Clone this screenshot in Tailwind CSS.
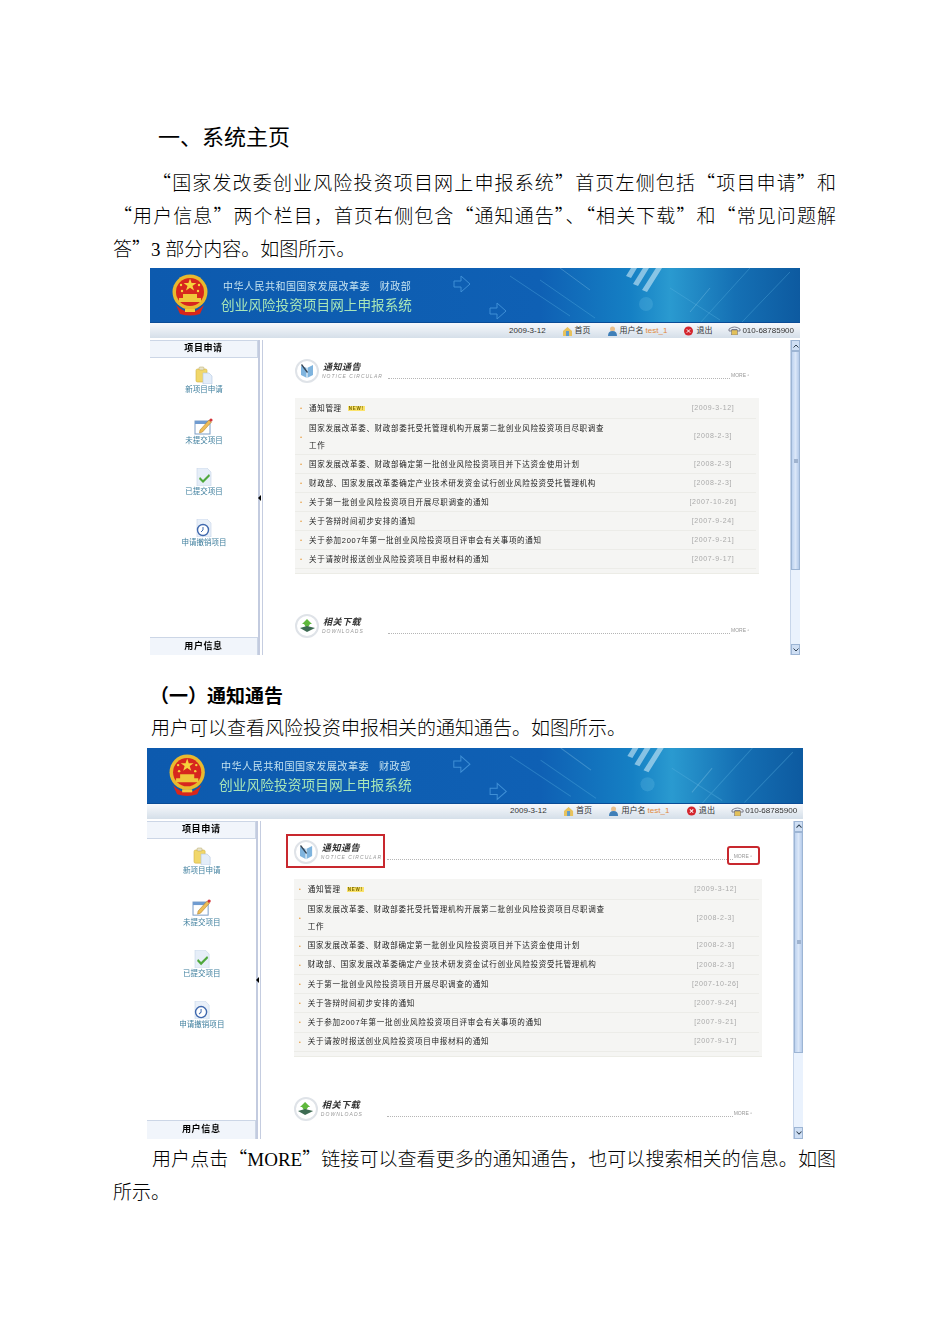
<!DOCTYPE html>
<html lang="zh-CN">
<head>
  <meta charset="UTF-8" />
  <title>系统主页</title>
  <script src="https://cdn.jsdelivr.net/npm/@tailwindcss/browser@4"></script>
</head>
<body class="bg-white text-black font-['Noto_Sans_CJK_SC','Liberation_Serif',serif] font-light text-[19px] leading-[33px]">

  <div class="w-[723px] ml-[113px] pt-[118px]">
    <h1 class="ml-[45px] text-[22px] leading-[34px] font-normal">一、系统主页</h1>
    <div class="mt-[13px]">
      <p class="pl-[39px] text-justify [text-align-last:justify]">“国家发改委创业风险投资项目网上申报系统”首页左侧包括“项目申请”和</p>
      <p class="text-justify [text-align-last:justify]">“用户信息”两个栏目，首页右侧包含“通知通告”、“相关下载”和“常见问题解</p>
      <p>答”<span class="font-['Liberation_Serif'] leading-none">3 </span>部分内容。如图所示。</p>
    </div>
    <div id="shot1" class="ml-[37px] mt-[4px] h-[387px]"></div>
    <h2 class="mt-[23px] ml-[37px] font-bold">（一）通知通告</h2>
    <p class="ml-[38px] mt-[-1px]">用户可以查看风险投资申报相关的通知通告。如图所示。</p>
    <div id="shot2" class="ml-[34px] mt-[5px] h-[387px] [zoom:1.0092]"></div>
    <div class="mt-[2px]">
      <p class="pl-[39px] text-justify [text-align-last:justify]">用户点击“<span class="font-['Liberation_Serif'] leading-none">MORE</span>”链接可以查看更多的通知通告，也可以搜索相关的信息。如图</p>
      <p>所示。</p>
    </div>
  </div>

  <script>
    const emblem = `
      <svg width="40" height="44" viewBox="0 0 40 44" class="shrink-0">
        <path d="M6 32 Q20 46 34 32 L30 41 Q20 44 10 41 Z" fill="#d8261c"/>
        <circle cx="20" cy="19" r="17.5" fill="#e9b92e"/>
        <circle cx="20" cy="19" r="14" fill="#d7261e"/>
        <path d="M20 5.5l1.6 4.6h4.8l-3.9 2.9 1.5 4.6-4-2.8-4 2.8 1.5-4.6-3.9-2.9h4.8z" fill="#f6d33c"/>
        <circle cx="11" cy="12" r="1.2" fill="#f6d33c"/><circle cx="29" cy="12" r="1.2" fill="#f6d33c"/>
        <circle cx="12" cy="18" r="1.2" fill="#f6d33c"/><circle cx="28" cy="18" r="1.2" fill="#f6d33c"/>
        <path d="M9 25h22v4H9zM13 21h14v4H13z" fill="#f0c63a"/>
        <path d="M15 36h10v3H15z" fill="#f3c93c"/>
      </svg>`;

    const bannerArt = `
      <svg class="absolute inset-0" width="650" height="55" viewBox="0 0 650 55" fill="none">
        <path d="M304 13h7v-5l9 8-9 8v-5h-7z" stroke="#3f8fd6" stroke-width="1"/>
        <path d="M340 40h7v-5l9 8-9 8v-5h-7z" stroke="#3f8fd6" stroke-width="1"/>
        <path d="M360 8l60 40M390 12l55 38M520 20l50 32M600 0l-50 55M640 4l-48 50" stroke="#5cb4e2" stroke-opacity=".35"/>
        <path d="M481 0l-5 8 5 2 6-10zM493 0l-10 16 5 2 11-18zM506 0l-14 22 5 2 15-24z" fill="#cfeaf6" fill-opacity=".6"/>
        <circle cx="496" cy="36" r="7" fill="#8fd6f2" fill-opacity=".18"/>
        <path d="M410 0l30 22M540 44l20-24" stroke="#9ad4ef" stroke-opacity=".3"/>
      </svg>`;

    const sideIcons = [
      `<svg width="20" height="18" viewBox="0 0 20 18"><rect x="2" y="3" width="11" height="13" rx="1.5" fill="#f1d76a" stroke="#d2b245" stroke-width=".6"/><rect x="5" y="1" width="5" height="3" rx="1" fill="#e8e4cc" stroke="#b8a860" stroke-width=".5"/><path d="M9 7h6l3 3v8H9z" fill="#e3edf9" stroke="#b4c7e0" stroke-width=".6"/></svg>`,
      `<svg width="20" height="18" viewBox="0 0 20 18"><rect x="1" y="4" width="15" height="13" fill="#fff" stroke="#7d9ec6"/><rect x="1" y="4" width="15" height="3" fill="#6f9bd0"/><path d="M6 13l9-10 2.5 2-9 10-3 1z" fill="#eebd57" stroke="#a6792a" stroke-width=".5"/><circle cx="17" cy="3" r="1.6" fill="#d3343a"/></svg>`,
      `<svg width="20" height="18" viewBox="0 0 20 18"><path d="M3 0h10l4 4v14H3z" fill="#e6eef8" stroke="#c7d5e8" stroke-width=".6"/><path d="M6 9l3 3 6-6 1 2-7 7-4-4z" fill="#4fa83c"/></svg>`,
      `<svg width="20" height="18" viewBox="0 0 20 18"><path d="M3 0h10l4 4v14H3z" fill="#e9f0f9" stroke="#c7d5e8" stroke-width=".6"/><circle cx="9" cy="11" r="5.5" fill="#fff" stroke="#3f68ad" stroke-width="1.4"/><path d="M9 8v3l-2 2" stroke="#3f68ad" fill="none"/></svg>`
    ];
    const sideLabels = ["新项目申请", "未提交项目", "已提交项目", "申请撤销项目"];

    const rows = [
      { text: "通知管理", date: "[2009-3-12]", isNew: true },
      { text: "国家发展改革委、财政部委托受托管理机构开展第二批创业风险投资项目尽职调查", more: "工作", date: "[2008-2-3]" },
      { text: "国家发展改革委、财政部确定第一批创业风险投资项目并下达资金使用计划", date: "[2008-2-3]" },
      { text: "财政部、国家发展改革委确定产业技术研发资金试行创业风险投资受托管理机构", date: "[2008-2-3]" },
      { text: "关于第一批创业风险投资项目开展尽职调查的通知", date: "[2007-10-26]" },
      { text: "关于答辩时间初步安排的通知", date: "[2007-9-24]" },
      { text: "关于参加2007年第一批创业风险投资项目评审会有关事项的通知", date: "[2007-9-21]" },
      { text: "关于请按时报送创业风险投资项目申报材料的通知", date: "[2007-9-17]" }
    ];

    function sectionHead(icon, title, sub) {
      return `
        <div class="flex items-end h-[26px]">
          <div class="w-[24px] h-[24px] rounded-full border-2 border-[#dfe3e8] bg-white flex items-center justify-center shrink-0">${icon}</div>
          <div class="ml-[3px] w-[66px] shrink-0 mb-[3px]">
            <div class="text-[9px] leading-[11px] font-bold italic text-[#333] tracking-[0.5px] pl-[1px]">${title}</div>
            <div class="text-[5px] leading-[7px] italic text-[#999] tracking-[1px] font-['Liberation_Sans',sans-serif]">${sub}</div>
          </div>
          <div class="flex-1 border-b border-dotted border-[#b5b5b5] mb-[4px]"></div>
          <div class="w-[29px] pl-[1px] text-[5px] leading-[8px] text-[#999] font-['Liberation_Sans',sans-serif] mb-[4px]">MORE ▫</div>
        </div>`;
    }

    function listRow(r, i) {
      const tag = r.isNew ? `<span class="ml-[6px] text-[4.5px] font-bold text-[#7a6a00] bg-[#fbe36a] px-[1px] leading-[5px] font-['Liberation_Sans',sans-serif]">NEW!</span>` : "";
      const rowClass = r.more ? "h-[36px]" : (i === 0 ? "h-[21px]" : "h-[19px]");
      return `
        <div class="flex items-center ${rowClass} border-b border-[#ecece8] mr-[3px]">
          <span class="w-[14px] pl-[5px] text-[#e8a24a] text-[6px] leading-none shrink-0">•</span>
          <div class="flex-1 text-[7.5px] leading-[17px] tracking-[0.7px] text-[#222]">
            <div class="flex items-center">${r.text}${tag}</div>
            ${r.more ? `<div>${r.more}</div>` : ""}
          </div>
          <span class="w-[86px] text-center text-[7px] tracking-[0.6px] text-[#aaa] font-['Liberation_Sans',sans-serif] shrink-0">${r.date}</span>
        </div>`;
    }

    function shot(marks) {
      return `
      <div class="relative w-[650px] h-[387px] overflow-hidden blur-[0.35px] font-normal leading-normal font-['Liberation_Sans','Noto_Sans_CJK_SC',sans-serif]">
        <div class="relative h-[55px] flex items-center pl-[20px] border-b border-[#0a4c96] bg-[linear-gradient(90deg,#0d5aae_0%,#0f60b4_60%,#1580c4_74%,#2a9ad0_80%,#1570b4_90%,#0d5aa0_100%)] overflow-hidden">
          ${bannerArt}
          ${emblem}
          <div class="relative ml-[11px] mt-[4px]">
            <div class="text-[10px] leading-[16px] tracking-[0.5px] text-[#c4e2ef] whitespace-pre pl-[2px]">中华人民共和国国家发展改革委   财政部</div>
            <div class="text-[13.6px] leading-[21px] tracking-[0.05px] text-[#a8e6b8]">创业风险投资项目网上申报系统</div>
          </div>
        </div>
        <div class="h-[15px] flex items-center justify-end pr-[6px] gap-[16px] text-[8px] text-[#333] bg-[linear-gradient(180deg,#f7f9fc,#d5dfe9)]">
          <span>2009-3-12</span>
          <span class="flex items-center gap-[2px]">
            <svg width="11" height="10" viewBox="0 0 11 10"><path d="M1 5l4.5-4L10 5v5H1z" fill="#e8c25c"/><path d="M4 5h3v5H4z" fill="#5f9ccc"/></svg>首页
          </span>
          <span class="flex items-center gap-[2px]">
            <svg width="11" height="10" viewBox="0 0 11 10"><circle cx="5.5" cy="3" r="2.5" fill="#e8c08e"/><path d="M1 10q0-5 4.5-5T10 10z" fill="#3f7fb8"/></svg>用户名 <span class="text-[#e08a3c]">test_1</span>
          </span>
          <span class="flex items-center gap-[2px]">
            <svg width="11" height="10" viewBox="0 0 11 10"><circle cx="5.5" cy="5" r="4.500" fill="#d4262e"/><path d="M3.800 3.300l3.400 3.400M7.200 3.300l-3.400 3.400" stroke="#fff"/></svg>退出
          </span>
          <span class="flex items-center gap-[1px]">
            <svg width="13" height="9" viewBox="0 0 13 9"><path d="M1 3q5.500-4 11 0v2H9V3.500H4V5H1z" fill="none" stroke="#667" stroke-width=".8"/><rect x="3.500" y="4" width="6" height="5" fill="#e2c05a" stroke="#667" stroke-width=".5"/></svg>010-68785900
          </span>
        </div>
        <div class="flex h-[315px] mt-[2px]">
          <aside class="w-[108px] shrink-0 flex flex-col">
            <div class="h-[18px] border border-[#ccd6e6] border-l-0 bg-[#f1f5fb] flex items-center justify-center text-[9px] font-bold tracking-[0.6px]">项目申请</div>
            <div class="flex-1 flex flex-col items-center pt-[8px] gap-[16px]">
              ${sideLabels.map((label, i) => `
                <div class="flex flex-col items-center h-[35px]">
                  ${sideIcons[i]}
                  <span class="text-[7.5px] leading-[12px] text-[#3f7f9e] whitespace-nowrap">${label}</span>
                </div>`).join("")}
            </div>
            <div class="h-[18px] border-t border-[#ccd6e6] bg-[#f1f5fb] flex items-center justify-center text-[9px] font-bold tracking-[0.6px] border-r">用户信息</div>
          </aside>
          <div class="w-[5px] shrink-0 border-r border-[#c5cde0] bg-[linear-gradient(90deg,#c3cbdf_60%,#fff_60%)] flex items-center">
            <span class="w-0 h-0 border-y-[3px] border-y-transparent border-r-[3px] border-r-black"></span>
          </div>
          <main class="flex-1 pl-[32px] pr-[33px] pt-[17px] overflow-hidden">
            ${sectionHead(`<svg width="16" height="16" viewBox="0 0 16 16"><path d="M2 3l6 2 6-3v10l-6 3-6-3z" fill="#7fb4de"/><path d="M8 5v10" stroke="#fff"/><path d="M3 1l6 8-1 1-6-8z" fill="#345"/></svg>`, "通知通告", "NOTICE CIRCULAR")}
            <div class="mt-[15px] h-[176px] bg-[#f5f5f3] border-b border-[#ecece6]">
              ${rows.map(listRow).join("")}
            </div>
            <div class="mt-[38px]">
              ${sectionHead(`<svg width="17" height="16" viewBox="0 0 17 16"><path d="M8 1l5 5h-2l-3 5-3-5H3z" fill="#5fb83c"/><path d="M1 10l7 4 8-4-8-2z" fill="#3d6b52"/></svg>`, "相关下载", "DOWNLOADS")}
            </div>
          </main>
          <div class="w-[10px] shrink-0 ml-[-2px] mr-0 flex flex-col bg-[#eaf2fd] border-l border-[#c8d6ea]">
            <div class="h-[11px] bg-[#cfdff4] border border-[#9db5d4] text-[#345] flex items-center justify-center">
              <svg width="6" height="4" viewBox="0 0 6 4"><path d="M.5 3.500L3 1l2.500 2.500" stroke="#345" fill="none"/></svg>
            </div>
            <div class="h-[219px] bg-[linear-gradient(90deg,#bed3f0,#dbe7f8_50%,#b5cbea)] border border-[#9db5d4] flex items-center justify-center">
              <span class="w-[4px] h-[4px] bg-[#9fb3cf]"></span>
            </div>
            <div class="flex-1"></div>
            <div class="h-[11px] bg-[#cfdff4] border border-[#9db5d4] flex items-center justify-center">
              <svg width="6" height="4" viewBox="0 0 6 4"><path d="M.5 .5L3 3 5.500 .5" stroke="#345" fill="none"/></svg>
            </div>
          </div>
        </div>
        ${marks ? `
          <div class="absolute left-[137px] top-[85px] w-[99px] h-[34px] border-2 border-[#c8282e]"></div>
          <div class="absolute left-[574px] top-[97px] w-[33px] h-[19px] border-2 border-[#c8282e] rounded-[3px]"></div>` : ""}
      </div>`;
    }

    document.getElementById("shot1").innerHTML = shot(false);
    document.getElementById("shot2").innerHTML = shot(true);
  </script>
</body>
</html>
